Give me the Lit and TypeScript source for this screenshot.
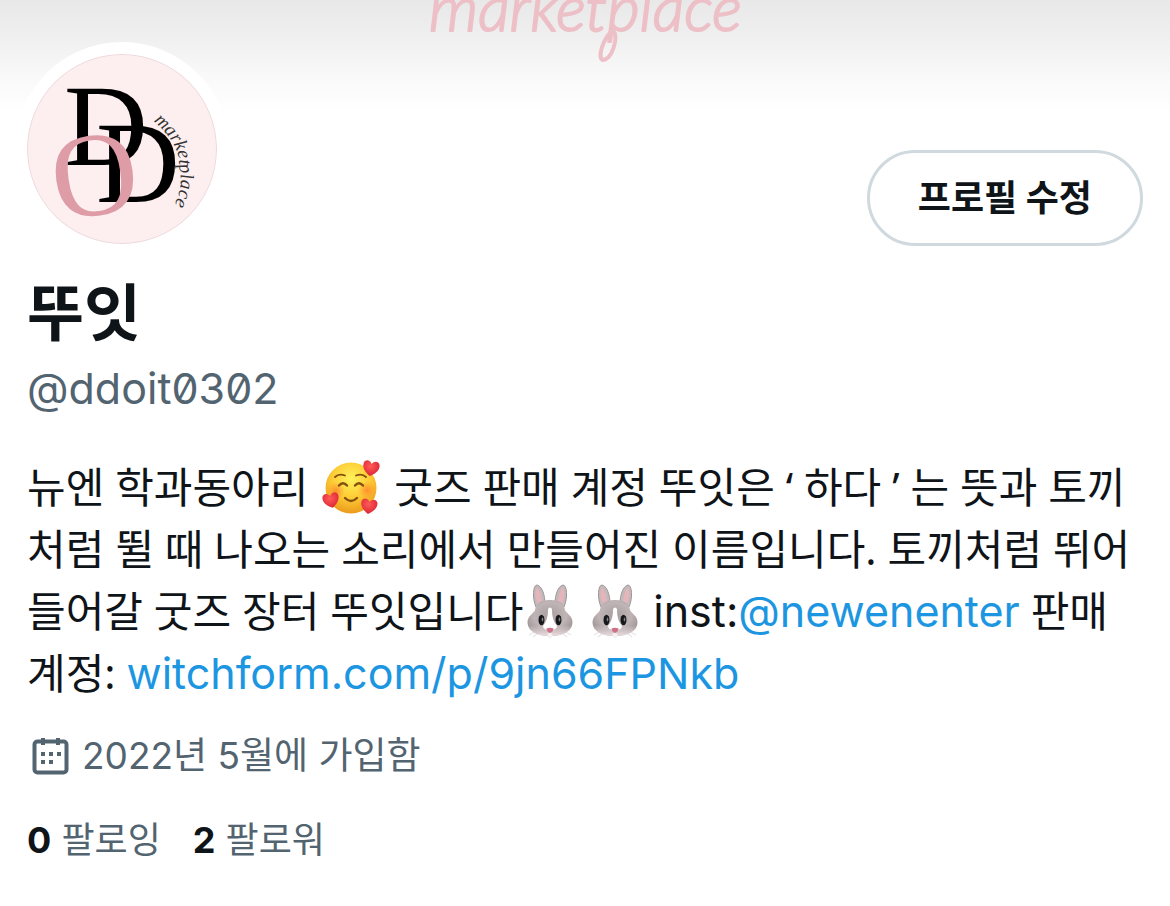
import { LitElement, html, css } from "lit";
import { customElement } from "lit/decorators.js";

@customElement("emoji-love")
class EmojiLove extends LitElement {
  static styles = css`
    :host { display: inline-block; width: 58px; height: 58px; margin: 0 3px; vertical-align: -14px; }
    svg { display: block; width: 100%; height: 100%; }
  `;
  render() {
    return html`<svg viewBox="0 0 58 58" role="img" aria-label="하트와 함께 웃는 얼굴">
      <defs>
        <radialGradient id="face" cx="50%" cy="32%" r="68%">
          <stop offset="0" stop-color="#fff25a" />
          <stop offset=".55" stop-color="#fdcb35" />
          <stop offset="1" stop-color="#ec9a1c" />
        </radialGradient>
        <radialGradient id="blush">
          <stop offset="0" stop-color="#ff7a2e" stop-opacity=".75" />
          <stop offset="1" stop-color="#ff8a2e" stop-opacity="0" />
        </radialGradient>
        <radialGradient id="heart" cx="45%" cy="35%" r="65%">
          <stop offset="0" stop-color="#ff5b58" />
          <stop offset="1" stop-color="#dc2434" />
        </radialGradient>
        <path id="h" d="M0 8C-5 5-9 1-8-4C-7-8-2-8 0-4C2-8 7-8 8-4C9 1 5 5 0 8Z" />
      </defs>
      <circle cx="29" cy="29" r="25.500" fill="url(#face)" />
      <circle cx="14" cy="32" r="9" fill="url(#blush)" />
      <circle cx="45" cy="31" r="9" fill="url(#blush)" />
      <g fill="none" stroke="#83500f" stroke-linecap="round">
        <path d="M13 18Q17 14 23 16.500M34 16.500Q40 14 44 18" stroke-width="1.800" />
        <path d="M17 26.500Q21 22 25 26.500M33 26.500Q37 22 41 26.500" stroke-width="2.400" />
        <path d="M23 39Q29 45 35 39" stroke-width="2.400" />
      </g>
      <use href="#h" transform="translate(49 9) rotate(10)" fill="url(#heart)" />
      <use href="#h" transform="translate(9 41) rotate(-12)" fill="url(#heart)" />
      <use href="#h" transform="translate(47 47) rotate(8)" fill="url(#heart)" />
    </svg>`;
  }
}

@customElement("emoji-rabbit")
class EmojiRabbit extends LitElement {
  static styles = css`
    :host { display: inline-block; width: 52px; height: 56px; margin: 0 1px; vertical-align: -12px; }
    svg { display: block; width: 100%; height: 100%; }
  `;
  render() {
    return html`<svg viewBox="1 0 52 56" role="img" aria-label="토끼 얼굴">
      <defs>
        <radialGradient id="fur" cx="50%" cy="42%" r="60%">
          <stop offset="0" stop-color="#a89d9f" />
          <stop offset=".6" stop-color="#bfb5b7" />
          <stop offset="1" stop-color="#9c9294" />
        </radialGradient>
        <linearGradient id="muzzle" x1="0" y1="0" x2="0" y2="1">
          <stop offset="0" stop-color="#eadfe2" stop-opacity="0" />
          <stop offset="1" stop-color="#f0dfe3" />
        </linearGradient>
      </defs>
      <path d="M6 52L13 48M10 54L15 50M48 52L41 48M44 54L39 50" stroke="#e9e6e6" stroke-width="1.200" />
      <g fill="#c4babb" stroke="#a19697" stroke-width="1">
        <path d="M13 24C9 15 10 2 14 2C19 3 22 12 22 21Z" />
        <path d="M41 24C45 15 44 2 40 2C35 3 32 12 32 21Z" />
      </g>
      <path d="M15 20C12 15 12 7 14 5C18 8 18 15 19 19ZM39 20C42 15 42 7 40 5C36 8 36 15 35 19Z" fill="#e5b5bb" />
      <path d="M27 17C37 17 41 21 42 27C43 30 49.500 33 49.500 39C49.500 49 38 53 27 53C16 53 4.500 49 4.500 39C4.500 33 11 30 12 27C13 21 17 17 27 17Z" fill="url(#fur)" />
      <path d="M5 42C12 43 20 42 27 44C34 42 42 43 49 42C47 50 37 53 27 53C17 53 7 50 5 42Z" fill="url(#muzzle)" />
      <path d="M25 26Q27 23 29 26C29 35 31 39 34 43Q34 47 27 47Q20 47 20 43C23 39 25 35 25 26Z" fill="#fff" />
      <ellipse cx="18.500" cy="37" rx="3" ry="5.300" fill="#171819" />
      <ellipse cx="35.500" cy="37" rx="3" ry="5.300" fill="#171819" />
      <ellipse cx="19.500" cy="36.500" rx=".8" ry="2" fill="#7f8788" />
      <ellipse cx="36.500" cy="36.500" rx=".8" ry="2" fill="#7f8788" />
      <rect x="24.500" y="50" width="5" height="5" rx="2" fill="#f4f1f1" />
      <path d="M23.500 45.500Q27 44 30.500 45.500Q30 49 27 50Q24 49 23.500 45.500Z" fill="#cf7088" />
    </svg>`;
  }
}

@customElement("app-root")
class AppRoot extends LitElement {
  static styles = css`
    :host {
      display: block;
      min-height: 100vh;
      background: #fff;
      color: #0f1419;
      font-family: Inter, "Noto Sans CJK KR", sans-serif;
    }
    .banner {
      height: 112px;
      overflow: hidden;
      background: linear-gradient(#e8e8e8, #f0f0f0 36%, #f9f9f9 68%, #fff);
      display: flex;
      justify-content: center;
    }
    .wordmark { display: block; width: 320px; height: 70px; overflow: visible; }
    .wordmark text { font: italic 300 63px Lato, sans-serif; fill: #edbfc6; stroke: #edbfc6; stroke-width: 2; stroke-linejoin: round; }
    .profile { padding: 0 27px 40px; }
    .top {
      display: flex;
      align-items: flex-end;
      justify-content: space-between;
      min-height: 192px;
      margin-top: -58px;
    }
    .avatar {
      display: block;
      align-self: flex-start;
      width: 190px;
      height: 190px;
      border-radius: 50%;
      background: #fdeff0;
      box-shadow: 0 0 0 12px #fff;
    }
    .avatar text { font-family: "Liberation Serif", serif; }
    .avatar .big { font-size: 116px; }
    .avatar .ring { font-size: 120px; fill: #dd9ca6; }
    .avatar .arc { font-size: 19px; font-style: italic; fill: #333; }
    .edit {
      height: 96px;
      padding: 0 48px;
      border: 3px solid #cfd9de;
      border-radius: 48px;
      background: #fff;
      color: inherit;
      font: 700 36px/48px Inter, "Noto Sans CJK KR", sans-serif;
    }
    h1 { margin: 32px 0 0; font-size: 62px; line-height: 72px; font-weight: 700; }
    .handle { margin: 10px 0 0; font-size: 43px; line-height: 56px; color: #536471; font-feature-settings: "zero"; }
    .bio { margin: 40px 0 0; font-family: "Noto Sans", "Noto Sans CJK KR", sans-serif; font-size: 42px; line-height: 62px; }
    .latin { font-family: Inter, sans-serif; font-size: 43px; line-height: 1; }
    a { color: inherit; text-decoration: none; }
    .bio a { color: #1d96e2; }
    .joined { display: flex; align-items: center; gap: 9px; margin: 26px 0 0; font-size: 37px; line-height: 52px; color: #536471; }
    .cal { display: block; width: 46px; height: 46px; }
    .counts { display: flex; gap: 32px; margin-top: 32px; font-size: 36px; line-height: 52px; color: #536471; }
    .counts strong { color: #0f1419; font-weight: 700; }
  `;

  render() {
    return html`
      <header class="banner">
        <svg class="wordmark" viewBox="0 0 320 70">
          <text x="4" y="31">marketplace</text>
          <path d="M188 30C178 38 172 58 178 60C187 59 194 38 188 30" fill="none" stroke="#edbfc6" stroke-width="4" stroke-linecap="round" />
        </svg>
      </header>
      <main class="profile">
        <div class="top">
          <svg class="avatar" viewBox="0 0 190 190" role="img" aria-label="뚜잇 프로필 사진">
            <defs><path id="arc" d="M126 67Q154 90 152 113Q157 131 148 149" /></defs>
            <circle cx="95" cy="95" r="94.500" fill="#fdeff0" stroke="#ead9dc" />
            <text class="big" x="37" y="111">D</text>
            <text class="big" x="69" y="148">D</text>
            <text class="ring" x="24" y="161" transform="rotate(-8 67 121)">O</text>
            <text class="arc"><textPath href="#arc">marketplace</textPath></text>
          </svg>
          <button class="edit" type="button">프로필 수정</button>
        </div>
        <h1>뚜잇</h1>
        <p class="handle">@ddoit0302</p>
        <p class="bio">뉴엔 학과동아리 <emoji-love></emoji-love> 굿즈 판매 계정 뚜잇은 ‘ 하다 ’ 는 뜻과 토끼처럼 뛸 때 나오는 소리에서 만들어진 이름입니다. 토끼처럼 뛰어들어갈 굿즈 장터 뚜잇입니다<emoji-rabbit></emoji-rabbit> <emoji-rabbit></emoji-rabbit> <span class="latin">inst:</span><a class="latin" href="#newenenter">@newenenter</a> 판매계정: <a class="latin" href="#witchform">witchform.com/p/9jn66FPNkb</a></p>
        <p class="joined">
          <svg class="cal" viewBox="0 0 46 46" aria-hidden="true">
            <rect x="7.500" y="8.500" width="32" height="31" rx="3" fill="none" stroke="#536471" stroke-width="4" />
            <path d="M14 5h4v3h11V5h4v7h-4v-2H18v2h-4ZM14 19h4v4h-4ZM22 19h4v4h-4ZM30 19h4v4h-4ZM14 27h4v4h-4ZM22 27h4v4h-4Z" fill="#536471" />
          </svg>
          <span>2022년 5월에 가입함</span>
        </p>
        <nav class="counts">
          <a href="#following"><strong>0</strong> 팔로잉</a>
          <a href="#followers"><strong>2</strong> 팔로워</a>
        </nav>
      </main>
    `;
  }
}
